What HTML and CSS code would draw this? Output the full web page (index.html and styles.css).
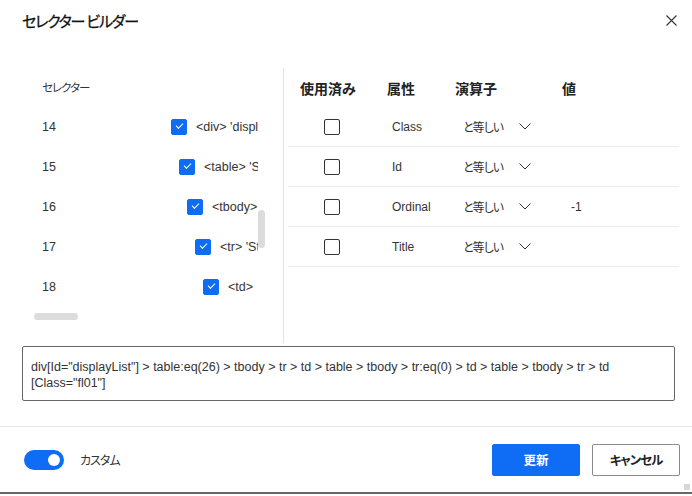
FILE: index.html
```html
<!DOCTYPE html>
<html lang="ja">
<head>
  <meta charset="UTF-8">
  <title>セレクター ビルダー</title>
  <link rel="stylesheet" href="styles.css">
</head>
<body>
  <div class="dialog">

    <!-- Header -->
    <div class="dialog-header">
      <span class="dialog-title">セレクター ビルダー</span>
      <span class="close">
        <svg width="11" height="11" viewBox="0 0 11 11"><path d="M0.5 0.5 L10.5 10.5 M10.5 0.5 L0.5 10.5" stroke="#333" stroke-width="1.1"/></svg>
      </span>
    </div>

    <div class="main">
      <!-- Selector tree -->
      <div class="tree-pane">
        <div class="tree-head">セレクター</div>
        <div class="tree-row">
          <span class="num">14</span>
          <span class="node lvl0"><span class="cb checked"></span><span class="tag">&lt;div&gt; 'displayList'</span></span>
        </div>
        <div class="tree-row">
          <span class="num">15</span>
          <span class="node lvl1"><span class="cb checked"></span><span class="tag">&lt;table&gt; 'Style'</span></span>
        </div>
        <div class="tree-row">
          <span class="num">16</span>
          <span class="node lvl2"><span class="cb checked"></span><span class="tag">&lt;tbody&gt;</span></span>
        </div>
        <div class="tree-row">
          <span class="num">17</span>
          <span class="node lvl3"><span class="cb checked"></span><span class="tag">&lt;tr&gt; 'Style'</span></span>
        </div>
        <div class="tree-row">
          <span class="num">18</span>
          <span class="node lvl4"><span class="cb checked"></span><span class="tag">&lt;td&gt;</span></span>
        </div>
        <div class="vscroll"></div>
        <div class="hscroll"></div>
      </div>

      <!-- Attributes -->
      <div class="attr-pane">
        <div class="attr-head">
          <span class="h-used">使用済み</span>
          <span class="h-attr">属性</span>
          <span class="h-op">演算子</span>
          <span class="h-val">値</span>
        </div>
        <div class="attr-row">
          <span class="c-used"><span class="cb"></span></span>
          <span class="c-attr">Class</span>
          <span class="c-op">と等しい <svg class="chev" width="12" height="7" viewBox="0 0 12 7"><path d="M0.5 0.5 L6 6 L11.5 0.5" fill="none" stroke="#333" stroke-width="1"/></svg></span>
          <span class="c-val"></span>
        </div>
        <div class="attr-row">
          <span class="c-used"><span class="cb"></span></span>
          <span class="c-attr">Id</span>
          <span class="c-op">と等しい <svg class="chev" width="12" height="7" viewBox="0 0 12 7"><path d="M0.5 0.5 L6 6 L11.5 0.5" fill="none" stroke="#333" stroke-width="1"/></svg></span>
          <span class="c-val"></span>
        </div>
        <div class="attr-row">
          <span class="c-used"><span class="cb"></span></span>
          <span class="c-attr">Ordinal</span>
          <span class="c-op">と等しい <svg class="chev" width="12" height="7" viewBox="0 0 12 7"><path d="M0.5 0.5 L6 6 L11.5 0.5" fill="none" stroke="#333" stroke-width="1"/></svg></span>
          <span class="c-val">-1</span>
        </div>
        <div class="attr-row">
          <span class="c-used"><span class="cb"></span></span>
          <span class="c-attr">Title</span>
          <span class="c-op">と等しい <svg class="chev" width="12" height="7" viewBox="0 0 12 7"><path d="M0.5 0.5 L6 6 L11.5 0.5" fill="none" stroke="#333" stroke-width="1"/></svg></span>
          <span class="c-val"></span>
        </div>
      </div>
    </div>

    <!-- Selector text -->
    <div class="selector-box">
      <span class="line">div[Id="displayList"] &gt; table:eq(26) &gt; tbody &gt; tr &gt; td &gt; table &gt; tbody &gt; tr:eq(0) &gt; td &gt; table &gt; tbody &gt; tr &gt; td</span><br>
      <span class="line">[Class="fl01"]</span>
    </div>

    <!-- Footer -->
    <div class="footer">
      <div class="custom">
        <span class="toggle"><span class="knob"></span></span>
        <span>カスタム</span>
      </div>
      <div class="buttons">
        <button class="btn primary">更新</button>
        <button class="btn">キャンセル</button>
      </div>
    </div>
    <span class="grip"></span>
  </div>
</body>
</html>
```

FILE: styles.css
```css
* {
  box-sizing: border-box;
}

body {
  margin: 0;
  background: #fff;
  font-family: 'Liberation Sans', 'Noto Sans CJK JP', sans-serif;
  font-feature-settings: "palt";
  color: #333;
}

.dialog {
  position: relative;
  width: 692px;
  height: 494px;
  border-bottom: 2px solid #666;
  display: flex;
  flex-direction: column;
}

.dialog-header {
  height: 40px;
  display: flex;
  align-items: center;
  justify-content: space-between;
  padding: 0 15px 0 22px;
}

.dialog-title {
  font-family: 'Noto Sans CJK JP', sans-serif;
  font-size: 15px;
  letter-spacing: -1.2px;
  color: #111;
  -webkit-text-stroke: 0.3px #111;
}

.close {
  display: flex;
}

.main {
  margin-top: 28px;
  height: 275px;
  display: flex;
}

/* tree */
.tree-pane {
  position: relative;
  width: 284px;
  border-right: 1px solid #e3e3e3;
}

.tree-head {
  height: 39px;
  line-height: 39px;
  padding-left: 42px;
  font-size: 11.5px;
  letter-spacing: -1px;
  font-family: 'Noto Sans CJK JP', sans-serif;
}

.tree-row {
  height: 40px;
  display: flex;
  align-items: center;
  font-size: 12px;
}

.tree-row .num {
  width: 171px;
  padding-left: 42px;
  font-size: 12.5px;
}

.node {
  width: 87px;
  overflow: hidden;
  white-space: nowrap;
  display: flex;
  align-items: center;
}

.lvl1 { padding-left: 8px; }
.lvl2 { padding-left: 16px; }
.lvl3 { padding-left: 24px; }
.lvl4 { padding-left: 32px; }

.tag {
  margin-left: 9px;
  font-size: 12.5px;
}

.cb {
  flex: none;
  display: inline-block;
  width: 16px;
  height: 16px;
  border: 1px solid #333;
  border-radius: 2px;
  position: relative;
}

.cb.checked {
  background: #0f6cf5;
  border-color: #0f6cf5;
}

.cb.checked::after {
  content: "";
  position: absolute;
  left: 4px;
  top: 3px;
  width: 6px;
  height: 3px;
  border-left: 1.2px solid #fff;
  border-bottom: 1.2px solid #fff;
  transform: rotate(-45deg);
}

.vscroll {
  position: absolute;
  left: 258px;
  top: 142px;
  width: 7px;
  height: 38px;
  border-radius: 4px;
  background: #dcdcdc;
}

.hscroll {
  position: absolute;
  left: 34px;
  top: 245px;
  width: 44px;
  height: 7px;
  border-radius: 4px;
  background: #dcdcdc;
}

/* attributes */
.attr-pane {
  width: 390px;
  margin-left: 4px;
}

.attr-head,
.attr-row {
  display: grid;
  grid-template-columns: 92px 68px 107px 1fr;
  align-items: center;
}

.attr-head {
  height: 39px;
  font-family: 'Noto Sans CJK JP', sans-serif;
  font-size: 14px;
  font-weight: 700;
  color: #222;
}

.h-used { padding-left: 12px; }
.h-attr,
.h-op,
.h-val { padding-left: 7px; }

.attr-row {
  height: 40px;
  border-bottom: 1px solid #ebebeb;
  font-size: 12px;
}

.c-used {
  display: flex;
  padding-left: 36px;
}

.c-attr { padding-left: 12px; }

.c-op {
  padding-left: 15px;
  display: flex;
  align-items: center;
  font-family: 'Noto Sans CJK JP', sans-serif;
  font-size: 12px;
  letter-spacing: -1px;
}

.chev {
  margin-left: 16px;
}

.c-val { padding-left: 16px; }

/* selector text */
.selector-box {
  margin: 3px 0 0 22px;
  width: 653px;
  height: 55px;
  border: 1px solid #666;
  border-radius: 2px;
  padding: 12px 0 0 8px;
  font-size: 12.5px;
  line-height: 16px;
  color: #333;
}

.selector-box .line {
  white-space: nowrap;
}

/* footer */
.footer {
  margin-top: 25px;
  border-top: 1px solid #e6e6e6;
  flex: 1;
  display: flex;
  align-items: center;
  justify-content: space-between;
  padding: 0 12px 0 24px;
}

.custom {
  display: flex;
  align-items: center;
  gap: 16px;
  font-family: 'Noto Sans CJK JP', sans-serif;
  font-size: 12px;
  letter-spacing: -1px;
}

.toggle {
  width: 40px;
  height: 20px;
  border-radius: 10px;
  background: #0f6cf5;
  display: flex;
  align-items: center;
  justify-content: flex-end;
  padding-right: 4px;
}

.knob {
  width: 12px;
  height: 12px;
  border-radius: 50%;
  background: #fff;
}

.buttons {
  display: flex;
  gap: 12px;
}

.btn {
  height: 32px;
  width: 88px;
  border: 1px solid #8a8a8a;
  border-radius: 2px;
  background: #fff;
  color: #222;
  font-family: 'Noto Sans CJK JP', sans-serif;
  font-size: 12.5px;
  font-weight: 700;
  letter-spacing: -1px;
  font-feature-settings: "palt";
}

.btn.primary {
  background: #0f6cf5;
  border-color: #0f6cf5;
  color: #fff;
  letter-spacing: 0;
}

.grip {
  position: absolute;
  right: 2px;
  bottom: 2px;
  width: 6px;
  height: 6px;
  background: radial-gradient(circle, #aaa 0.6px, transparent 0.8px) 0 0 / 2px 2px;
}
```
